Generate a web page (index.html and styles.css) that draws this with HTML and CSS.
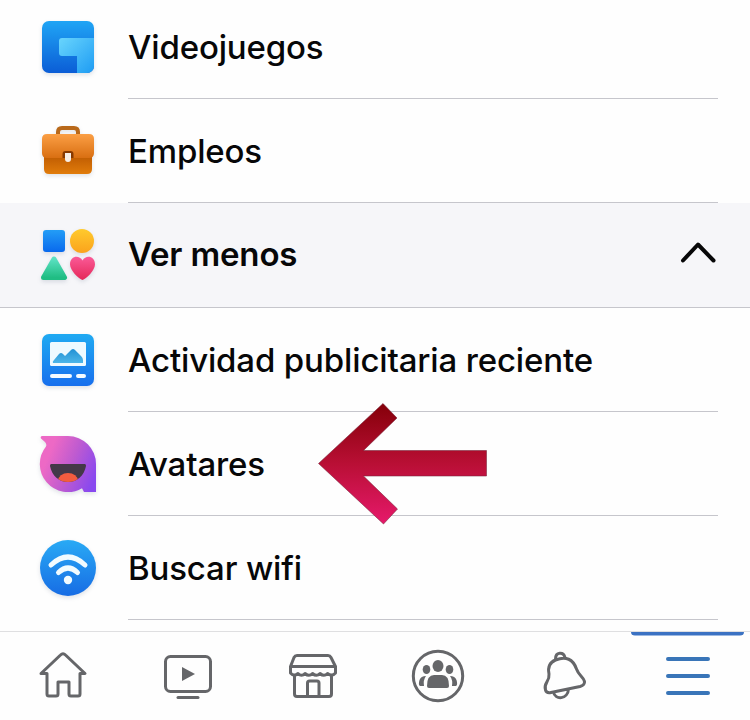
FILE: index.html
```html
<!DOCTYPE html>
<html lang="es">
<head>
<meta charset="utf-8">
<title>Menú</title>
<link rel="stylesheet" href="styles.css">
</head>
<body>
<main class="menu">
  <div class="row first">
    <svg class="icon" viewBox="28 7 80 80">
      <defs>
        <linearGradient id="gameBack" x1="0" y1="0" x2="0" y2="1"><stop offset="0" stop-color="#20a5f5"/><stop offset="1" stop-color="#0b5dd6"/></linearGradient>
        <linearGradient id="gameFront" x1="0" y1="0" x2="1" y2="1"><stop offset="0" stop-color="#69d5fd"/><stop offset="1" stop-color="#1e9cf3"/></linearGradient>
      </defs>
      <rect x="42" y="21" width="52" height="52" rx="7" fill="url(#gameBack)"/>
      <path d="M62 38H94V66a7 7 0 0 1-7 7H77V56H62a3 3 0 0 1-3-3V41a3 3 0 0 1 3-3z" fill="url(#gameFront)"/>
    </svg>
    <div class="label"><span>Videojuegos</span></div>
  </div>
  <div class="row">
    <svg class="icon" viewBox="28 111 80 80">
      <defs>
        <linearGradient id="caseTop" x1="0" y1="0" x2="0" y2="1"><stop offset="0" stop-color="#fb9f45"/><stop offset="1" stop-color="#d96f12"/></linearGradient>
        <linearGradient id="caseBottom" x1="0" y1="0" x2="0" y2="1"><stop offset="0" stop-color="#b85500"/><stop offset="1" stop-color="#e17c0b"/></linearGradient>
      </defs>
      <path d="M58 135v-3q0-4 4-4h12q4 0 4 4v3" fill="none" stroke="#b9691a" stroke-width="4"/>
      <path d="M44 152H92V169q0 5-5 5H49q-5 0-5-5z" fill="url(#caseBottom)"/>
      <path d="M47 134H89q5 0 5 5v14q0 5-5 5H47q-5 0-5-5v-14q0-5 5-5z" fill="url(#caseTop)"/>
      <path d="M62.500 158v-4q0-3 3-3h5q3 0 3 3v4z" fill="#873900"/>
      <path d="M65 153h6v6q0 3-3 3t-3-3z" fill="#f7eee7"/>
    </svg>
    <div class="label"><span>Empleos</span></div>
  </div>
  <div class="row section">
    <svg class="icon" viewBox="28 215 80 80">
      <defs>
        <linearGradient id="square" x1="0" y1="0" x2="0" y2="1"><stop offset="0" stop-color="#239df6"/><stop offset="1" stop-color="#0969ed"/></linearGradient>
        <linearGradient id="circle" x1="0" y1="0" x2="0" y2="1"><stop offset="0" stop-color="#ffca2d"/><stop offset="1" stop-color="#fba31c"/></linearGradient>
        <linearGradient id="triangle" x1="0" y1="0" x2="0" y2="1"><stop offset="0" stop-color="#5ae0c1"/><stop offset="1" stop-color="#20bd83"/></linearGradient>
        <linearGradient id="heart" x1="0" y1="0" x2="0" y2="1"><stop offset="0" stop-color="#fa5a97"/><stop offset="1" stop-color="#e52859"/></linearGradient>
      </defs>
      <rect x="43" y="230" width="22" height="22" rx="3" fill="url(#square)"/>
      <circle cx="82" cy="241" r="12" fill="url(#circle)"/>
      <path d="M54 259L64.500 277.500H43.500z" fill="url(#triangle)" stroke="url(#triangle)" stroke-width="5" stroke-linejoin="round"/>
      <path d="M82.500 280C79 279 70 270.500 70 264.500C70 256 79 254.500 82.500 260.500C86 254.500 95 256 95 264.500C95 270.500 86 279 82.500 280z" fill="url(#heart)"/>
    </svg>
    <div class="label"><span>Ver menos</span></div>
    <svg class="chevron" viewBox="678 238 40 30"><path d="M683 260.500L698 244.500L713.500 260.500"/></svg>
  </div>
  <div class="row">
    <svg class="icon" viewBox="28 320 80 80">
      <defs>
        <linearGradient id="adBack" x1="0" y1="0" x2="0" y2="1"><stop offset="0" stop-color="#20aaf2"/><stop offset="1" stop-color="#176fed"/></linearGradient>
        <linearGradient id="hills" x1="0" y1="0" x2="0" y2="1"><stop offset="0" stop-color="#2291d5"/><stop offset="1" stop-color="#4db6e8"/></linearGradient>
      </defs>
      <rect x="42" y="334" width="52" height="52" rx="7" fill="url(#adBack)"/>
      <rect x="50" y="342" width="36" height="24" rx="1.500" fill="#eefaff"/>
      <path d="M53 363q-1-1 1-3l5-6q2-2 4 0l2 2 6-6q2-2 4 0l6 6q2 2 2 4v3z" fill="url(#hills)"/>
      <path d="M52 376H70M78 376H84" stroke="#f4fbff" stroke-width="4" stroke-linecap="round"/>
    </svg>
    <div class="label"><span>Actividad publicitaria reciente</span></div>
  </div>
  <div class="row">
    <svg class="icon" viewBox="28 424 80 80">
      <defs>
        <linearGradient id="face" x1="0" y1="0.300" x2="1" y2="0.700"><stop offset="0.150" stop-color="#ed69c5"/><stop offset="0.550" stop-color="#bf5bd0"/><stop offset="1" stop-color="#8848ef"/></linearGradient>
        <clipPath id="mouth"><path d="M51 464H85a2 2 0 0 1 1 2C84 476 77 482 68 482S52 476 50 466a2 2 0 0 1 1-2z"/></clipPath>
      </defs>
      <path d="M42 436H68A28 28 0 0 1 96 464V492H84L82 488.200A28 28 0 0 1 46 446.500Q47 444.500 45 442L41 438.500Q40 436.500 42 436z" fill="url(#face)"/>
      <g clip-path="url(#mouth)"><path d="M48 462H88V484H48z" fill="#443848"/><ellipse cx="68" cy="481" rx="10" ry="8" fill="#f35c3f"/></g>
    </svg>
    <div class="label"><span>Avatares</span></div>
    <svg class="arrow" viewBox="310 395 184 136">
      <defs><linearGradient id="crimson" x1="0" y1="0" x2="0" y2="1"><stop offset="0" stop-color="#850009"/><stop offset="0.500" stop-color="#b90f35"/><stop offset="1" stop-color="#e6196b"/></linearGradient></defs>
      <path d="M318.500 463.500L383 403.500L397 418L363.500 450.500H486.500V476H363.500L397.500 509L383.500 524z" fill="url(#crimson)" stroke="#74243b" stroke-opacity=".55"/>
    </svg>
  </div>
  <div class="row">
    <svg class="icon" viewBox="28 528 80 80">
      <defs><linearGradient id="wifi" x1="0" y1="0" x2="0" y2="1"><stop offset="0" stop-color="#29aaf5"/><stop offset="1" stop-color="#176ce4"/></linearGradient></defs>
      <circle cx="68" cy="568" r="28" fill="url(#wifi)"/>
      <g fill="none" stroke="#f1fbff" stroke-width="5" stroke-linecap="round"><path d="M51 565Q68 549 85 565"/><path d="M58.500 572.500Q68 563.500 77.500 572.500"/></g>
      <circle cx="68" cy="580" r="4.200" fill="#f1fbff"/>
    </svg>
    <div class="label"><span>Buscar wifi</span></div>
  </div>
</main>
<nav class="tabs">
  <svg class="tab" viewBox="0 632 125 88"><path d="M41 673.500L60.500 655Q63 652.500 65.500 655L85 673.500H80V694Q80 696 78 696H71Q69 696 69 694V682H58V694Q58 696 56 696H49Q47 696 47 694V673.500z"/></svg>
  <svg class="tab" viewBox="125 632 125 88"><rect x="165.500" y="656.500" width="45" height="35" rx="5"/><path d="M178 697.500H198"/><path class="solid" d="M182 667L195 674L182 681z"/></svg>
  <svg class="tab" viewBox="250 632 125 88"><path d="M297 655.500H328Q330 655.500 331 657.500L335.500 666.500V673Q332 677 327.500 673.500Q324 677 320 673.500Q316.500 677 312.500 673.500Q309 677 305 673.500Q301.500 677 298 673.500Q294 677 290.500 673V666.500L294 657.500Q295 655.500 297 655.500zM290.500 666.500H335.500M294.500 675V694Q294.500 696.500 297 696.500H329Q331.500 696.500 331.500 694V675M307.500 696V683Q307.500 681 309.500 681H317Q319 681 319 683V696"/></svg>
  <svg class="tab" viewBox="375 632 125 88"><circle cx="438" cy="676" r="24.700"/><g class="solid"><ellipse cx="438" cy="666" rx="5.500" ry="6"/><ellipse cx="426.500" cy="669.500" rx="3.800" ry="4.500"/><ellipse cx="449.500" cy="669.500" rx="3.800" ry="4.500"/><path d="M427 686Q427 675 434 675H442Q449 675 449 686Q449 688 447 688H429Q427 688 427 686z"/><path d="M426 676Q423 680 424 686H420Q418 685 419.500 680Q421 676 426 676zM450 676Q453 680 452 686H456Q458 685 456.500 680Q455 676 450 676z"/></g></svg>
  <svg class="tab" viewBox="500 632 125 88"><path d="M555.500 660C548 663 548 669 549 674C550 682 543 683 545.500 690Q546.500 693.500 551 692.500L580 686.500Q585 685 584.500 681.500C583 676 579 676 576.500 669C573 659 566 656 555.500 660zM555.500 659C555.500 651.500 563.500 651.500 565 657.500M553.500 692C555 700.500 568 699.500 568.500 689"/></svg>
  <svg class="tab active" viewBox="625 632 125 88"><path class="marker" d="M631 632H744Q744 635.500 740 635.500H635Q631 635.500 631 632z"/><path d="M668 659H708M668 676H708M668 693H708"/></svg>
</nav>
</body>
</html>
```
FILE: styles.css
```css
* { box-sizing: border-box; }

body {
  margin: 0;
  width: 750px;
  height: 720px;
  overflow: hidden;
  display: flex;
  flex-direction: column;
  background: #fefefe;
  color: #070708;
  font-family: Inter, "Liberation Sans", sans-serif;
}

.menu { height: 631px; flex: none; }

.row {
  position: relative;
  display: flex;
  align-items: center;
  height: 104px;
  padding: 0 32px 0 28px;
}

.first { height: 99px; }
.first .icon { margin-bottom: 5px; }
.first .label { padding-bottom: 4px; }

.icon {
  flex: none;
  width: 80px;
  height: 80px;
  filter: drop-shadow(0 2px 2px rgb(60 80 110 / 0.16));
}

.label {
  align-self: stretch;
  display: flex;
  flex: 1;
  align-items: center;
  margin-left: 20px;
  border-bottom: 1px solid #c6c6cc;
  font-size: 33px;
  font-weight: 500;
  letter-spacing: -0.15px;
  line-height: 40px;
  white-space: nowrap;
}

.section {
  height: 105px;
  background: #f6f6f9;
  border-bottom: 1px solid #c6c6cc;
}

.section .label {
  padding-bottom: 2px;
  border-bottom: 0;
  font-weight: 600;
}

.chevron {
  width: 40px;
  height: 30px;
  margin-bottom: 4px;
  fill: none;
  stroke: #070708;
  stroke-width: 4;
  stroke-linecap: round;
  stroke-linejoin: round;
}

.arrow {
  position: absolute;
  z-index: 1;
  top: -17px;
  left: 310px;
  width: 184px;
  height: 136px;
}

.tabs {
  display: flex;
  height: 89px;
  border-top: 1px solid #dfdfe1;
}

.tab {
  width: 125px;
  height: 88px;
  fill: none;
  stroke: #656669;
  stroke-width: 3;
  stroke-linecap: round;
  stroke-linejoin: round;
}

.tab .solid { fill: #656669; stroke: none; }
.active { stroke: #3975b8; stroke-width: 4; }
.active .marker { fill: #3b72c3; stroke: none; }
```
